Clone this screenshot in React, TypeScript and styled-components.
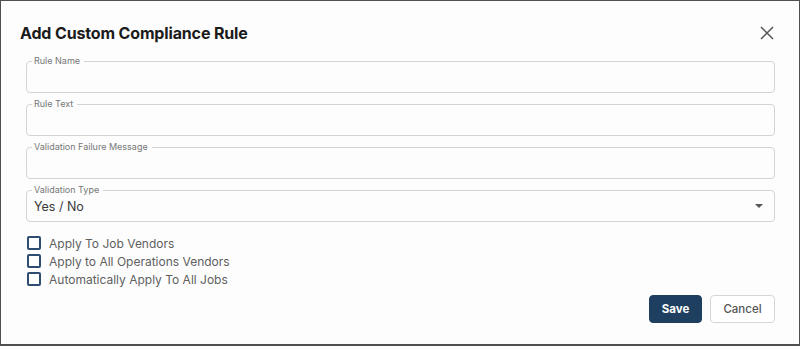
import { ReactNode } from 'react';
import styled, { createGlobalStyle } from 'styled-components';

const GlobalStyle = createGlobalStyle`
    html, body {
        margin: 0;
        padding: 0;
        background: #ffffff;
    }
    * {
        box-sizing: border-box;
    }
`;

const fields = ['Rule Name', 'Rule Text', 'Validation Failure Message'];

const options = [
    'Apply To Job Vendors',
    'Apply to All Operations Vendors',
    'Automatically Apply To All Jobs'
];

interface FieldProps {
    label: string,
    children?: ReactNode
}

const Field = (props: FieldProps) => {
    return (
        <FieldBox>
            <Legend>{props.label}</Legend>
            <FieldBody>{props.children}</FieldBody>
        </FieldBox>
    );
}

const App = () => {
    return (
        <>
            <GlobalStyle />
            <Dialog>
                <Header>
                    <Title>Add Custom Compliance Rule</Title>
                    <CloseButton aria-label="close">
                        <svg width="14" height="14" viewBox="0 0 14 14">
                            <path d="M1 1L13 13M13 1L1 13" stroke="#555" strokeWidth="1.5" fill="none" />
                        </svg>
                    </CloseButton>
                </Header>
                <Form>
                    {fields.map((f) => (
                        <Field key={f} label={f} />
                    ))}
                    <Field label="Validation Type">
                        <SelectValue>Yes / No</SelectValue>
                        <Caret />
                    </Field>
                    <Checks>
                        {options.map((o) => (
                            <CheckRow key={o}>
                                <Box />
                                <CheckLabel>{o}</CheckLabel>
                            </CheckRow>
                        ))}
                    </Checks>
                </Form>
                <Footer>
                    <Button primary>Save</Button>
                    <Button>Cancel</Button>
                </Footer>
            </Dialog>
        </>
    );
}

const Dialog = styled.div`
    width: 800px;
    height: 346px;
    border: 1px solid #4f4f4f;
    border-bottom-width: 2px;
    background: #fdfdfd;
    font-family: 'Inter', 'Liberation Sans', sans-serif;
    display: flex;
    flex-direction: column;
`;

const Header = styled.div`
    display: flex;
    justify-content: space-between;
    align-items: center;
    padding: 0 25px 0 19px;
    margin-top: 21px;
    height: 22px;
    margin-bottom: 12px;
`;

const Title = styled.h2`
    margin: 0;
    font-size: 16px;
    font-weight: 700;
    color: #1b1b1b;
    letter-spacing: -0.15px;
`;

const CloseButton = styled.button`
    border: none;
    background: none;
    padding: 0;
    width: 14px;
    height: 14px;
    display: flex;
    cursor: pointer;
`;

const Form = styled.div`
    display: flex;
    flex-direction: column;
    gap: 6px;
    padding: 0 24px 0 25px;
`;

const FieldBox = styled.fieldset`
    margin: 0;
    padding: 0 6px 0 6px;
    border: 1px solid #d4d4d4;
    border-radius: 4px;
    height: 37px;
`;

const Legend = styled.legend`
    padding: 0 4px 0 2px;
    margin-left: -1px;
    font-size: 9px;
    line-height: 10px;
    color: #777;
`;

const FieldBody = styled.div`
    display: flex;
    align-items: center;
    justify-content: space-between;
    height: 22px;
`;

const SelectValue = styled.span`
    font-size: 12.5px;
    color: #3a3a3a;
    padding-left: 1px;
`;

const Caret = styled.span`
    width: 0;
    height: 0;
    border-left: 4px solid transparent;
    border-right: 4px solid transparent;
    border-top: 4px solid #555;
    margin-right: 5px;
`;

const Checks = styled.div`
    display: flex;
    flex-direction: column;
    gap: 4px;
    margin-top: 8px;
    padding-left: 1px;
`;

const CheckRow = styled.label`
    display: flex;
    align-items: center;
    gap: 8px;
    height: 14px;
`;

const Box = styled.span`
    width: 14px;
    height: 14px;
    border: 2px solid #2f4d70;
    border-radius: 2px;
    background: #fff;
`;

const CheckLabel = styled.span`
    font-size: 12px;
    color: #5f5f5f;
`;

const Footer = styled.div`
    display: flex;
    justify-content: flex-end;
    gap: 8px;
    padding: 0 24px 0 0;
    margin-top: auto;
    margin-bottom: 21px;
`;

const Button = styled.button<{ primary?: boolean }>`
    height: 28px;
    padding: 0;
    width: ${(p) => (p.primary ? '53px' : '65px')};
    border-radius: 4px;
    font-family: 'Inter', 'Liberation Sans', sans-serif;
    font-size: 11.5px;
    font-weight: ${(p) => (p.primary ? 700 : 500)};
    color: ${(p) => (p.primary ? '#ffffff' : '#555')};
    background: ${(p) => (p.primary ? '#1f3f61' : '#ffffff')};
    border: 1px solid ${(p) => (p.primary ? '#1f3f61' : '#d6d6d6')};
`;

export default App;
